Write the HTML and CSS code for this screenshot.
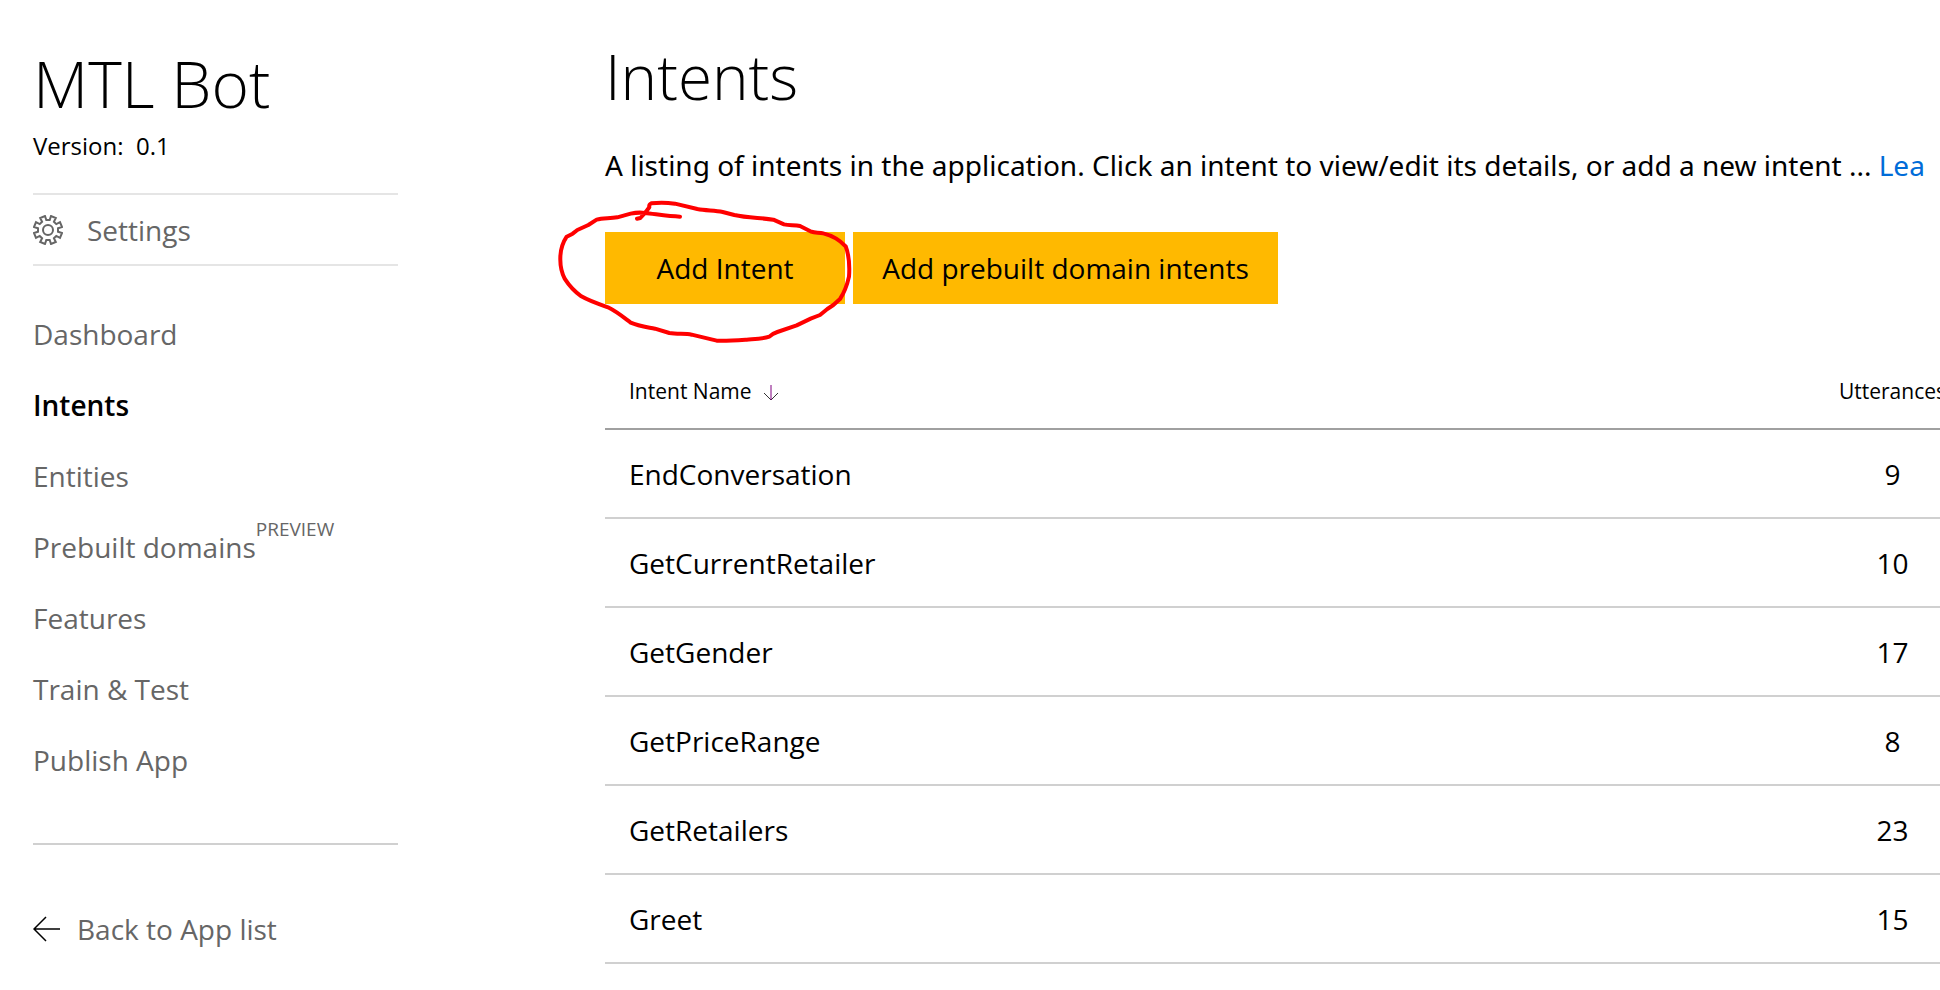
FILE: index.html
```html
<!DOCTYPE html>
<html lang="en">
<head>
<meta charset="utf-8">
<title>MTL Bot - Intents</title>
<link rel="stylesheet" href="styles.css">
</head>
<body>
<div class="app">
  <aside class="sidebar">
    <h1 class="app-name">MTL Bot</h1>
    <p class="version">Version:&nbsp; 0.1</p>
    <a class="settings" href="#">
      <svg class="gear" viewBox="0 0 30 30" aria-hidden="true"><path d="M12 1 13.300 5 16.700 5 18 1 22.800 3 20.900 6.700 23.300 9.100 27 7.200 29 12 25 13.300 25 16.700 29 18 27 22.800 23.300 20.900 20.900 23.300 22.800 27 18 29 16.700 25 13.300 25 12 29 7.200 27 9.100 23.300 6.700 20.900 3 22.800 1 18 5 16.700 5 13.300 1 12 3 7.200 6.700 9.100 9.100 6.700 7.200 3Z"/><circle cx="15" cy="15" r="5"/></svg>
      Settings
    </a>
    <nav class="menu">
      <a href="#">Dashboard</a>
      <a class="active" href="#">Intents</a>
      <a href="#">Entities</a>
      <a href="#">Prebuilt domains<span class="preview">PREVIEW</span></a>
      <a href="#">Features</a>
      <a href="#">Train &amp; Test</a>
      <a href="#">Publish App</a>
    </nav>
    <a class="back" href="#">
      <svg class="arrow-left" viewBox="0 0 28 26" aria-hidden="true"><path d="M27 13H1M13 1 1 13l12 12"/></svg>
      Back to App list
    </a>
  </aside>
  <main class="content">
    <h2 class="page-title">Intents</h2>
    <p class="intro">A listing of intents in the application. Click an intent to view/edit its details, or add a new intent ... <a href="#">Lea</a></p>
    <div class="actions">
      <button class="btn btn-add" type="button">Add Intent</button>
      <button class="btn btn-prebuilt" type="button">Add prebuilt domain intents</button>
      <svg class="highlight" viewBox="0 0 1200 540" aria-hidden="true"><path d="M420 110C385 109 345 102 315 99Q295 96 272 101L232 112C208 116 188 114 170 119L145 135 112 150 98 161 80 170C68 188 60 210 61 240C61 265 67 282 74 296C88 318 104 335 124 349C148 363 175 372 204 382C232 396 252 413 272 428C295 438 320 441 345 446L388 459C412 463 435 460 455 464L530 482C562 483 590 481 620 479C645 477 668 477 688 470Q697 461 712 456L770 436 812 416 840 405 862 387 880 375 900 357C915 335 922 312 927 290C929 262 927 225 917 199C900 181 875 166 850 160C838 156 825 160 814 155L780 138C765 134 748 137 732 133L700 119C662 113 622 114 583 105L548 96C523 91 498 92 472 87L405 71Q368 66 334 70Q326 74 328 82L315 99 301 114 291 116"/></svg>
    </div>
    <table class="intents">
      <thead>
        <tr><th scope="col">Intent Name <svg class="sort" viewBox="0 0 16 18" aria-hidden="true"><path class="head" d="M1 9l7 7 7-7"/><path class="stem" d="M8 1v15"/></svg></th><th class="count" scope="col">Utterances</th></tr>
      </thead>
      <tbody>
        <tr><td>EndConversation</td><td class="count">9</td></tr>
        <tr><td>GetCurrentRetailer</td><td class="count">10</td></tr>
        <tr><td>GetGender</td><td class="count">17</td></tr>
        <tr><td>GetPriceRange</td><td class="count">8</td></tr>
        <tr><td>GetRetailers</td><td class="count">23</td></tr>
        <tr><td>Greet</td><td class="count">15</td></tr>
      </tbody>
    </table>
  </main>
</div>
</body>
</html>
```
FILE: styles.css
```css
* { box-sizing: border-box; }

body {
  margin: 0;
  background: #fff;
  color: #000;
  font: 28px/40px "Segoe UI", "Open Sans", "Noto Sans", sans-serif;
  overflow-x: hidden;
}

h1, h2, p { margin: 0; font-weight: 400; }
a { color: inherit; text-decoration: none; }
svg { fill: none; flex: none; }

.app {
  display: grid;
  grid-template-columns: 365px minmax(0, 1fr);
  column-gap: 207px;
  padding-left: 33px;
  overflow: hidden;
}

.sidebar { padding-top: 44px; }

.app-name, .page-title {
  font-size: 64px;
  line-height: 80px;
  font-weight: 300;
}

.page-title { font-size: 62px; }

.version {
  margin: 6px 0 31px;
  font-size: 24px;
  line-height: 32px;
}

.settings {
  display: flex;
  align-items: center;
  gap: 24px;
  height: 73px;
  border-top: 2px solid #e5e5e5;
  border-bottom: 2px solid #e5e5e5;
  color: #666;
}

.gear { width: 30px; height: 30px; stroke: #666; stroke-width: 2; }

.menu {
  display: flex;
  flex-direction: column;
  padding: 33px 0 47px;
  border-bottom: 2px solid #d0d0d0;
  line-height: 71px;
  color: #666;
}

.menu .active { color: #000; font-weight: 600; }

.preview {
  font-size: 19px;
  line-height: 20px;
  vertical-align: 22px;
}

.back {
  display: flex;
  align-items: center;
  gap: 16px;
  margin-top: 64px;
  color: #666;
}

.arrow-left { width: 28px; height: 26px; stroke: #000; stroke-width: 1.5; }

.content { padding-top: 36px; margin-right: -6px; }

.intro {
  margin: 29px 0 47px;
  font-family: "Segoe UI", "Noto Sans", sans-serif;
  white-space: nowrap;
}

.intro a { color: #006cd8; }

.actions { position: relative; display: flex; gap: 8px; }

.btn {
  height: 72px;
  padding: 0;
  border: 0;
  background: #ffb900;
  color: #000;
  font: inherit;
}

.btn-add { width: 240px; }
.btn-prebuilt { width: 425px; }

.highlight {
  position: absolute;
  left: -65px;
  top: -52px;
  width: 400px;
  height: 180px;
  stroke: #f00;
  stroke-width: 12;
  stroke-linecap: round;
  stroke-linejoin: round;
  pointer-events: none;
}

.intents {
  width: 100%;
  margin-top: 48px;
  border-collapse: separate;
  border-spacing: 0;
}

.intents th {
  height: 78px;
  padding: 2px 0 0 24px;
  border-bottom: 2px solid #a0a0a0;
  font-size: 21px;
  font-weight: 400;
  text-align: left;
}

.intents td {
  height: 89px;
  padding: 0 0 0 24px;
  border-bottom: 2px solid #d0d0d0;
}

.intents .count { width: 106px; padding-left: 0; text-align: center; }

.sort { width: 16px; height: 18px; margin-left: 6px; vertical-align: -3px; }
.sort .head { stroke: #333; }
.sort .stem { stroke: #800080; }
```
